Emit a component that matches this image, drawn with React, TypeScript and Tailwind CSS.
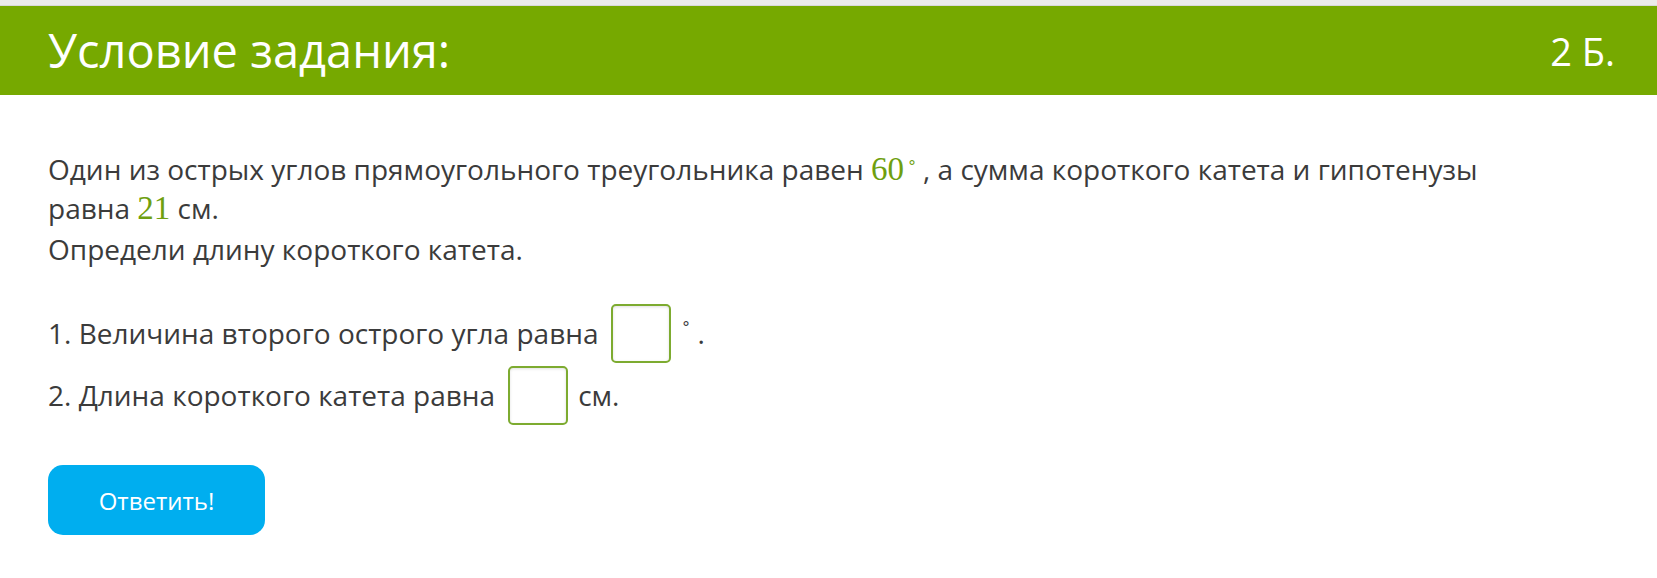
import React from "react";

function Box() {
  return (
    <span className="ml-[13px] mr-[10px] inline-block h-[59px] w-[60px] shrink-0 rounded-[5px] border-2 border-[#7dab30] bg-white shadow-[inset_0_1px_3px_rgba(0,0,0,0.12)]" />
  );
}

function M({ children }: { children: React.ReactNode }) {
  return (
    <span className="font-['Liberation_Serif','DejaVu_Serif',serif] text-[33px] leading-none text-[#6f9f10]">
      {children}
    </span>
  );
}

export default function App() {
  return (
    <div className="min-h-screen bg-white font-['Open_Sans',sans-serif]">
      <div className="h-[6px] border-b border-[#d9d9d9] bg-[#ebebeb]" />
      <div className="flex h-[89px] items-center justify-between bg-[#76a900] pl-12 pr-[42px] text-white">
        <h1 className="text-[47px] font-normal leading-none">Условие задания:</h1>
        <span className="text-[38px] leading-none">2 Б.</span>
      </div>
      <div className="px-12 pt-[55px] text-[28px] leading-[39px] text-[#3b3b3b]">
        <p>
          Один из острых углов прямоугольного треугольника равен <M>60</M>
          <span className="relative -top-[12px] ml-[3px] mr-[6px] text-[16px] leading-none text-[#6f9f10]">∘</span>, а сумма короткого катета и гипотенузы
          <br />
          равна <M>21</M> см.
        </p>
        <p className="mt-[2px]">Определи длину короткого катета.</p>
        <div className="mt-[35px] flex flex-col gap-[3px]">
          <div className="flex h-[59px] items-center">
            <span>1. Величина второго острого угла равна</span>
            <Box />
            <span className="-mt-[22px] text-[16px] leading-none">∘</span>
            <span className="ml-[6px]">.</span>
          </div>
          <div className="flex h-[59px] items-center">
            <span>2. Длина короткого катета равна</span>
            <Box />
            <span>см.</span>
          </div>
        </div>
        <button className="mt-[40px] flex h-[70px] w-[217px] items-center justify-center rounded-[15px] bg-[#00aeef] text-[24px] text-white">
          Ответить!
        </button>
      </div>
    </div>
  );
}
